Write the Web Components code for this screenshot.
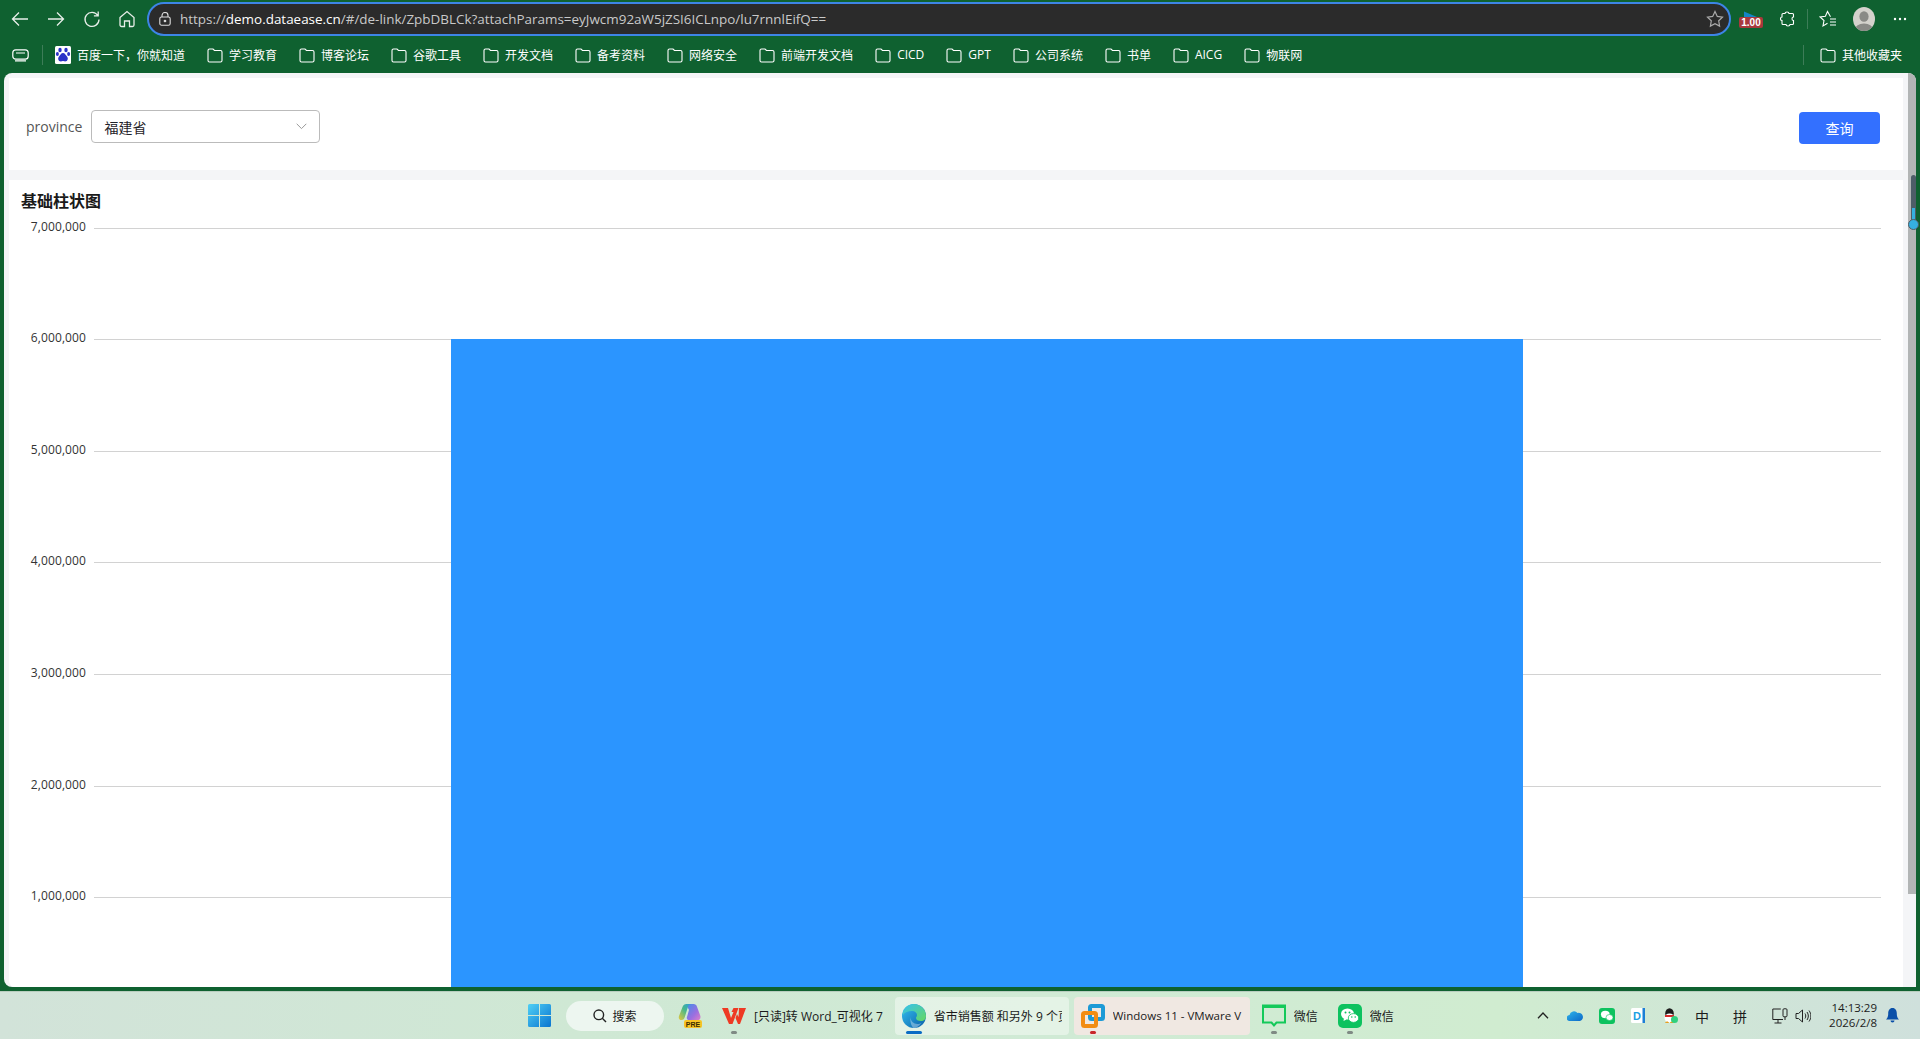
<!DOCTYPE html>
<html lang="zh">
<head>
<meta charset="utf-8">
<title>DataEase</title>
<style>
  html, body { margin: 0; height: 100%; overflow: hidden; }
  body {
    font-family: "Open Sans", "Noto Sans CJK SC", sans-serif;
    background: #0f6130;
  }
  #app { display: flex; flex-direction: column; height: 1039px; }
  svg { display: block; }
</style>
</head>
<body>
<div id="app">
  <browser-toolbar url-host="demo.dataease.cn" url-rest="/#/de-link/ZpbDBLCk?attachParams=eyJwcm92aW5jZSI6ICLnpo/lu7rnnlEifQ=="></browser-toolbar>
  <bookmark-bar>
    <bookmark-item text="百度一下，你就知道" baidu></bookmark-item>
    <bookmark-item text="学习教育"></bookmark-item>
    <bookmark-item text="博客论坛"></bookmark-item>
    <bookmark-item text="谷歌工具"></bookmark-item>
    <bookmark-item text="开发文档"></bookmark-item>
    <bookmark-item text="备考资料"></bookmark-item>
    <bookmark-item text="网络安全"></bookmark-item>
    <bookmark-item text="前端开发文档"></bookmark-item>
    <bookmark-item text="CICD"></bookmark-item>
    <bookmark-item text="GPT"></bookmark-item>
    <bookmark-item text="公司系统"></bookmark-item>
    <bookmark-item text="书单"></bookmark-item>
    <bookmark-item text="AICG"></bookmark-item>
    <bookmark-item text="物联网"></bookmark-item>
    <bookmark-item slot="end" text="其他收藏夹"></bookmark-item>
  </bookmark-bar>
  <page-frame>
    <filter-panel label="province" value="福建省" action="查询"></filter-panel>
    <bar-chart title-text="基础柱状图"></bar-chart>
  </page-frame>
  <win-taskbar>
    <!-- start button -->
    <svg width="23" height="23" viewBox="0 0 23 23">
      <defs><linearGradient id="wg" x1="0" y1="0" x2="1" y2="1"><stop offset="0" stop-color="#4fd0f5"/><stop offset="1" stop-color="#0a74d0"/></linearGradient></defs>
      <path fill="url(#wg)" d="M0 1.500A1.500 1.500 0 0 1 1.500 0H11V11H0ZM12 0H21.500A1.500 1.500 0 0 1 23 1.500V11H12ZM0 12H11V23H1.500A1.500 1.500 0 0 1 0 21.500ZM12 12H23V21.500A1.500 1.500 0 0 1 21.500 23H12Z"/>
    </svg>
    <search-pill style="margin-left:15px" text="搜索"></search-pill>
    <task-item style="margin-left:14px;padding:0">
      <svg slot="icon" width="24" height="24" viewBox="0 0 24 24">
        <defs>
          <linearGradient id="cp1" x1="0" y1="1" x2="1" y2="0"><stop offset="0" stop-color="#e8c83c"/><stop offset=".55" stop-color="#45b88a"/><stop offset="1" stop-color="#2f9ae0"/></linearGradient>
          <linearGradient id="cp2" x1="0" y1="0" x2="1" y2="1"><stop offset="0" stop-color="#3f8fe8"/><stop offset=".6" stop-color="#9a6fe0"/><stop offset="1" stop-color="#e07fc8"/></linearGradient>
        </defs>
        <path fill="url(#cp2)" d="M8 0h7.500c1.800 0 3 1 3.500 2.700l3.300 9c.8 2.600-.8 4.800-3.300 4.800H12c-1.800 0-2.800-1-3.300-2.600L11 6 8 0z"/>
        <path fill="url(#cp1)" d="M8.500 0h5c-1.800 0-3 1-3.500 2.700L6.800 13c-.6 2-1.500 3-3.300 3C1 16 .3 14 1 12L4.500 3C5.200 1 6.500 0 8.500 0z"/>
        <rect x="6" y="16" width="18" height="8" rx="2" fill="#f7c325"/>
        <text x="15" y="22.600" font-family="Liberation Sans" font-size="7" font-weight="700" text-anchor="middle" fill="#3a2c00">PRE</text>
      </svg>
    </task-item>
    <task-item style="margin-left:20px;padding:0" text="[只读]转 Word_可视化 7" mark="gray">
      <svg slot="icon" width="24" height="24" viewBox="0 0 24 24">
        <path fill="#ee3a24" d="M0 4h6l3 10 2.500-6h-2l2-4h5l-6 16H7zM17 4h7l-6 16h-2l-2.500-6 1.500-4 1.500 3z"/>
      </svg>
    </task-item>
    <task-item style="margin-left:12px;width:174px;background:rgba(255,255,255,.42)" text="省市销售额 和另外 9 个页" mark="active">
      <svg slot="icon" width="24" height="24" viewBox="0 0 24 24">
        <defs>
          <linearGradient id="eg1" x1="0" y1="0" x2="1" y2="1"><stop offset="0" stop-color="#35c1f1"/><stop offset="1" stop-color="#0a5fa8"/></linearGradient>
          <linearGradient id="eg2" x1="0" y1="0" x2="1" y2="1"><stop offset="0" stop-color="#35c1f1"/><stop offset="1" stop-color="#66d860"/></linearGradient>
        </defs>
        <circle cx="12" cy="12" r="12" fill="url(#eg1)"/>
        <path fill="url(#eg2)" d="M1 8C3 2 8 0 12 0c6 0 12 5 12 12 0 3-2 5-5 5-3 0-5-1-5-3 0-1 1-1.500 1-3 0-2-2-4-5-4C6 7 3 8 1 11z"/>
        <path fill="#fff" d="M8.500 13c0 4 3 7 7 7 1.500 0 3-.4 4-1.200C17 22.500 14 24 11.500 24 9 22 8 17 8.500 13z" opacity=".35"/>
      </svg>
    </task-item>
    <task-item style="margin-left:5px;width:176px;background:#f0e8e2;font-size:11.500px" text="Windows 11 - VMware V" mark="red">
      <svg slot="icon" width="24" height="24" viewBox="0 0 24 24" fill="none">
        <rect x="9" y="2" width="13" height="13" rx="1.500" stroke="#1d9ad6" stroke-width="4"/>
        <rect x="2" y="9" width="13" height="13" rx="1.500" stroke="#f28c13" stroke-width="4"/>
      </svg>
    </task-item>
    <task-item style="margin-left:12px;padding:0" text="微信" mark="gray">
      <svg slot="icon" width="24" height="24" viewBox="0 0 24 24" fill="none">
        <path stroke="#14c95a" stroke-width="2" d="M1 1.500h22v17H14.500L12 21.500 9.500 18.500H1z"/>
        <rect x="1" y="1" width="22" height="3" fill="#14c95a"/>
      </svg>
    </task-item>
    <task-item style="margin-left:20px;padding:0" text="微信" mark="gray">
      <svg slot="icon" width="24" height="24" viewBox="0 0 24 24">
        <rect width="24" height="24" rx="5" fill="#0dc25f"/>
        <ellipse cx="9.500" cy="10" rx="6.500" ry="5.500" fill="#fff"/>
        <path fill="#fff" d="M6 14l-.5 3 3-1.500z"/>
        <ellipse cx="15.500" cy="14" rx="5.200" ry="4.400" fill="#fff" stroke="#0dc25f" stroke-width=".8"/>
        <circle cx="7.500" cy="8.500" r="1" fill="#0dc25f"/><circle cx="11.500" cy="8.500" r="1" fill="#0dc25f"/>
        <circle cx="13.800" cy="13" r=".8" fill="#0dc25f"/><circle cx="17.200" cy="13" r=".8" fill="#0dc25f"/>
      </svg>
    </task-item>
    <system-tray slot="tray"></system-tray>
  </win-taskbar>
</div>

<script>
// folder outline used by every bookmark
const FOLDER = `<svg width="16" height="16" viewBox="0 0 16 16" fill="none" stroke="#fff" stroke-width="1.100">
  <path d="M1 3.500A1.500 1.500 0 0 1 2.500 2H6l1.500 1.500h6A1.500 1.500 0 0 1 15 5v8.500a1.500 1.500 0 0 1-1.500 1.500h-11A1.500 1.500 0 0 1 1 13.500z"/>
</svg>`;

const BAIDU = `<svg width="16" height="18" viewBox="0 0 16 18">
  <rect width="16" height="18" rx="1.500" fill="#fff"/>
  <g fill="#2b32c8">
    <ellipse cx="5" cy="4" rx="1.700" ry="2.300"/><ellipse cx="11" cy="4" rx="1.700" ry="2.300"/>
    <ellipse cx="2.400" cy="8" rx="1.500" ry="2"/><ellipse cx="13.600" cy="8" rx="1.500" ry="2"/>
    <path d="M8 7c2 0 2.500 2 4 3.500s1 5-2 5c-1 0-1.200-.4-2-.4s-1 .4-2 .4c-3 0-3.500-3.500-2-5S6 7 8 7z"/>
  </g>
</svg>`;

class BrowserToolbar extends HTMLElement {
  constructor() {
    super();
    this.attachShadow({ mode: "open" });
    this.shadowRoot.innerHTML = `
      <style>
        :host { display: flex; align-items: center; height: 36px; padding-left: 11px; padding-top: 1px; box-sizing: border-box; color: #fff; }
        .nav { display: flex; align-items: center; gap: 18px; margin-right: 12px; }
        .url {
          box-sizing: border-box; width: 1584px; height: 34px; display: flex; align-items: center;
          background: #2b2b2b; border: 2px solid #3d85e6; border-radius: 17px; padding: 0 5px 0 10px;
        }
        .text { flex: 1; margin-left: 9px; font-size: 13.440px; color: #c9c9c9; white-space: nowrap; overflow: hidden; }
        .text b { font-weight: 400; color: #fff; }
        .tools { display: flex; align-items: center; }
      </style>
      <div class="nav">
        <svg width="18" height="18" viewBox="0 0 18 18" fill="none" stroke="#e8eee9" stroke-width="1.300"><path d="M17 9H1.500M8 2.500 1.500 9 8 15.500"/></svg>
        <svg width="18" height="18" viewBox="0 0 18 18" fill="none" stroke="#e8eee9" stroke-width="1.300"><path d="M1 9h15.500M10 2.500 16.500 9 10 15.500"/></svg>
        <svg width="18" height="18" viewBox="0 0 18 18" fill="none" stroke="#e8eee9" stroke-width="1.300"><path d="M14.800 5.500A7 7 0 1 0 16 9.500M15.200 1.500v4.300h-4.300"/></svg>
        <svg width="16" height="18" viewBox="0 0 16 18" fill="none" stroke="#e8eee9" stroke-width="1.300"><path d="M1 7.500 8 1.500l7 6V15a1.500 1.500 0 0 1-1.500 1.500H10.500V11h-5v5.500H2.500A1.500 1.500 0 0 1 1 15z"/></svg>
      </div>
      <div class="url">
        <svg width="12" height="14" viewBox="0 0 12 14" fill="none" stroke="#ddd" stroke-width="1.100"><rect x=".8" y="5" width="10.400" height="8.200" rx="1.800"/><path d="M3 5V3.500a3 3 0 0 1 6 0V5"/><circle cx="6" cy="9" r=".8" fill="#ddd"/></svg>
        <div class="text">https://<b>${this.getAttribute("url-host")}</b>${this.getAttribute("url-rest")}</div>
        <svg width="18" height="18" viewBox="0 0 18 18" fill="none" stroke="#aaa" stroke-width="1.200"><path d="M9 1.500l2.300 4.900 5.200.7-3.800 3.700.9 5.300L9 13.600l-4.600 2.500.9-5.300L1.500 7.100l5.200-.7z"/></svg>
      </div>
      <div class="tools">
        <svg style="margin-left:8px" width="24" height="18" viewBox="0 0 24 18">
          <path d="M5 1.500 18 7H5z" fill="#1585c5"/>
          <rect y="7" width="24" height="11" rx="2" fill="#a8383c"/>
          <text x="12" y="15.700" font-family="Liberation Sans" font-size="10" font-weight="700" text-anchor="middle" fill="#fff">1.00</text>
        </svg>
        <svg style="margin-left:17px" width="15" height="17" viewBox="0 0 15 17" fill="none" stroke="#fff" stroke-width="1.100"><path d="M5 3.500C5 1.500 9 1.500 9 3.500h3.500a1 1 0 0 1 1 1V7c-2 0-2 3.500 0 3.500v3a1 1 0 0 1-1 1H10c0 2-4 2-4 0H3a1 1 0 0 1-1-1V10.500c-2 0-2-3.500 0-3.500V4.500a1 1 0 0 1 1-1z"/></svg>
        <div style="margin-left:12px;width:1px;height:20px;background:#3d7d58"></div>
        <svg style="margin-left:11px" width="18" height="18" viewBox="0 0 18 18" fill="none" stroke="#fff" stroke-width="1.100"><path d="M11.500 6.700 8.500 1.500 6.400 6.200 1 6.900l4 3.600-1 5.400 4.500-2.600M11 9h6M11 12h6M11 15h6"/></svg>
        <svg style="margin-left:15px" width="24" height="24" viewBox="0 0 24 24"><defs><clipPath id="av"><ellipse cx="12" cy="12" rx="11" ry="12"/></clipPath></defs><ellipse cx="12" cy="12" rx="11" ry="12" fill="#d4d2cc"/><g clip-path="url(#av)" fill="#8a8a86"><ellipse cx="12" cy="9.500" rx="4.600" ry="5.300"/><ellipse cx="12" cy="23" rx="9.500" ry="6.500"/></g></svg>
        <svg style="margin-left:17px" width="14" height="4" viewBox="0 0 14 4" fill="#fff"><circle cx="2" cy="2" r="1.200"/><circle cx="7" cy="2" r="1.200"/><circle cx="12" cy="2" r="1.200"/></svg>
      </div>
    `;
  }
}

class BookmarkBar extends HTMLElement {
  constructor() {
    super();
    this.attachShadow({ mode: "open" });
    this.shadowRoot.innerHTML = `
      <style>
        :host { display: flex; align-items: center; height: 37px; padding-left: 12px; padding-right: 18px; box-sizing: border-box; }
        .sep { width: 1px; height: 20px; background: #3d7d58; }
        .items { flex: 1; display: flex; align-items: center; gap: 22px; margin-left: 12px; }
        .end { display: flex; align-items: center; }
        .end .sep { margin-right: 16px; }
      </style>
      <svg width="17" height="14" viewBox="0 0 17 14" fill="none" stroke="#fff" stroke-width="1.200" style="display:block;margin-right:13px"><rect x=".8" y="1.800" width="15.400" height="9.400" rx="3"/><path d="M4 5h9M3 12.800h11"/></svg>
      <div class="sep"></div>
      <div class="items"><slot></slot></div>
      <div class="end"><div class="sep"></div><slot name="end"></slot></div>
    `;
  }
}

class BookmarkItem extends HTMLElement {
  constructor() {
    super();
    this.attachShadow({ mode: "open" });
    this.shadowRoot.innerHTML = `
      <style>
        :host { display: flex; align-items: center; gap: 6px; color: #fff; font-size: 12px; white-space: nowrap; }
      </style>
      ${this.hasAttribute("baidu") ? BAIDU : FOLDER}
      <span>${this.getAttribute("text")}</span>
    `;
  }
}

class PageFrame extends HTMLElement {
  constructor() {
    super();
    this.attachShadow({ mode: "open" });
    this.shadowRoot.innerHTML = `
      <style>
        :host {
          display: flex; flex: 1; min-height: 0; margin: 0 4px 4px 4px; position: relative;
          background: #f4f5f7; border-radius: 8px 8px 0 8px;
        }
        .content { flex: 1; min-width: 0; display: flex; flex-direction: column; gap: 10px; padding: 5px 5px 0 5px; }
        .rail { width: 8px; background: linear-gradient(#b2b5b5 0, #b2b5b5 821px, #f4f5f7 821px); border-radius: 0 8px 0 0; position: relative; }
        .thumb { position: absolute; left: 3px; top: 102px; width: 5px; height: 53px; background: #4e5d68; border-radius: 3px; }
        .thumb::before { content: ""; position: absolute; left: 1px; top: 33px; width: 3px; height: 18px; background: #35b0e0; }
        .ball { box-sizing: border-box; position: absolute; left: 0; top: 146px; width: 11px; height: 11px; background: #35b0e0; border: 1.500px solid #4e5d68; border-radius: 50%; }
      </style>
      <div class="content"><slot></slot></div>
      <div class="rail"><div class="thumb"></div><div class="ball"></div></div>
    `;
  }
}

class FilterPanel extends HTMLElement {
  constructor() {
    super();
    this.attachShadow({ mode: "open" });
    this.shadowRoot.innerHTML = `
      <style>
        :host { display: flex; align-items: center; justify-content: space-between; height: 92px; background: #fff; padding: 0 23px 0 17px; box-sizing: border-box; flex: none; }
        .field { display: flex; align-items: center; gap: 9px; margin-top: 5px; }
        label { font-size: 14px; color: #555; }
        .select {
          box-sizing: border-box; width: 229px; height: 33px; border: 1px solid #bbb; border-radius: 4px;
          display: flex; align-items: center; justify-content: space-between; padding: 0 12px; font-size: 14px; color: #1f2329;
        }
        button {
          width: 81px; height: 32px; border: 0; border-radius: 4px; background: #3370ff; color: #fff;
          font: inherit; font-size: 14px; padding: 0; margin-top: 7px;
        }
      </style>
      <div class="field">
        <label>${this.getAttribute("label")}</label>
        <div class="select">
          <span>${this.getAttribute("value")}</span>
          <svg width="11" height="7" viewBox="0 0 11 7" fill="none" stroke="#999" stroke-width="1"><path d="M.7.8 5.500 5.600 10.300.8"/></svg>
        </div>
      </div>
      <button>${this.getAttribute("action")}</button>
    `;
  }
}

class BarChart extends HTMLElement {
  constructor() {
    super();
    this.attachShadow({ mode: "open" });
    const ticks = ["7,000,000", "6,000,000", "5,000,000", "4,000,000", "3,000,000", "2,000,000", "1,000,000"];
    this.shadowRoot.innerHTML = `
      <style>
        :host { display: block; flex: 1; min-height: 0; background: #fff; overflow: hidden; border-radius: 0 0 0 6px; }
        h2 { margin: 0; padding: 10px 0 0 12px; height: 37px; box-sizing: border-box; font-size: 16px; line-height: 22px; font-weight: 700; color: #1a1a1a; }
        .plot { position: relative; padding-top: 10.500px; padding-right: 22px; }
        .row { display: flex; align-items: flex-start; gap: 8px; height: 111.630px; }
        .row span { width: 77px; flex: none; margin-top: -10px; font-size: 12px; line-height: 18px; text-align: right; color: #333; letter-spacing: .1px; }
        .row i { flex: 1; height: 1px; background: #d2d2d2; }
        .bar { position: absolute; left: 442px; top: 122px; width: 1072px; height: 700px; background: #2b95ff; }
      </style>
      <h2>${this.getAttribute("title-text")}</h2>
      <div class="plot">
        ${ticks.map((t) => `<div class="row"><span>${t}</span><i></i></div>`).join("")}
        <div class="bar"></div>
      </div>
    `;
  }
}

class WinTaskbar extends HTMLElement {
  constructor() {
    super();
    this.attachShadow({ mode: "open" });
    this.shadowRoot.innerHTML = `
      <style>
        :host {
          display: flex; align-items: center; height: 48px; padding-left: 528px; padding-right: 21px; box-sizing: border-box;
          background: linear-gradient(90deg, #d2e3d9 0%, #cfe8d4 30%, #d0ead5 55%, #d0ecd0 78%, #cfe0dc 100%);
          border-top: 1px solid #b9cdbf; color: #1b1b1b; font-size: 12px;
        }
        .center { flex: 1; display: flex; align-items: center; }
      </style>
      <div class="center"><slot></slot></div>
      <slot name="tray"></slot>
    `;
  }
}

class SearchPill extends HTMLElement {
  constructor() {
    super();
    this.attachShadow({ mode: "open" });
    this.shadowRoot.innerHTML = `
      <style>
        :host { display: flex; align-items: center; justify-content: center; gap: 5px; width: 98px; height: 30px; background: #edf6f0; border-radius: 15px; }
      </style>
      <svg width="14" height="14" viewBox="0 0 14 14" fill="none" stroke="#222" stroke-width="1.400"><circle cx="5.800" cy="5.800" r="4.800"/><path d="M9.300 9.300 13 13"/></svg>
      <span>${this.getAttribute("text")}</span>
    `;
  }
}

class TaskItem extends HTMLElement {
  constructor() {
    super();
    this.attachShadow({ mode: "open" });
    const text = this.getAttribute("text");
    const mark = this.getAttribute("mark");
    this.shadowRoot.innerHTML = `
      <style>
        :host {
          display: flex; align-items: center; gap: 8px; height: 38px; padding: 0 7px; box-sizing: border-box;
          border-radius: 4px; white-space: nowrap; overflow: hidden; flex: none;
        }
        .icon { position: relative; width: 24px; height: 38px; display: flex; align-items: center; flex: none; }
        .mark { position: absolute; left: 9px; bottom: 1px; width: 6px; height: 3px; border-radius: 2px; }
        .gray { background: #7f8a84; }
        .red { background: #c8262a; }
        .active { left: 4px; width: 16px; background: #0a6cc4; }
        .label { overflow: hidden; flex: 1; }
      </style>
      <div class="icon"><slot name="icon"></slot>${mark ? `<div class="mark ${mark}"></div>` : ""}</div>
      ${text ? `<div class="label">${text}</div>` : ""}
    `;
  }
}

class SystemTray extends HTMLElement {
  constructor() {
    super();
    this.attachShadow({ mode: "open" });
    this.shadowRoot.innerHTML = `
      <style>
        :host { display: flex; align-items: center; }
        .ime { font-size: 14px; width: 16px; text-align: center; }
        .clock { text-align: right; font-size: 11.500px; line-height: 15px; margin-left: 18px; margin-top: -2px; }
      </style>
      <svg width="12" height="7" viewBox="0 0 12 7" fill="none" stroke="#222" stroke-width="1.300"><path d="M1 6.300 6 1l5 5.300"/></svg>
      <svg style="margin-left:18px" width="16" height="11" viewBox="0 0 16 11">
        <defs><linearGradient id="od" x1="0" y1="0" x2="1" y2="1"><stop offset="0" stop-color="#2fb5ea"/><stop offset="1" stop-color="#0c68c8"/></linearGradient></defs>
        <path fill="url(#od)" d="M3 11a3 3 0 0 1-.5-6A4.500 4.500 0 0 1 10.500 3 3.500 3.500 0 0 1 13 11z"/>
      </svg>
      <svg style="margin-left:16px" width="16" height="16" viewBox="0 0 16 16">
        <rect width="16" height="16" rx="3" fill="#0dc25f"/>
        <ellipse cx="6.300" cy="6.500" rx="4.400" ry="3.700" fill="#fff"/>
        <ellipse cx="10.500" cy="9.500" rx="3.500" ry="3" fill="#fff" stroke="#0dc25f" stroke-width=".6"/>
      </svg>
      <svg style="margin-left:16px" width="14" height="15" viewBox="0 0 14 15">
        <rect width="14" height="15" rx="1.500" fill="#fff"/>
        <rect x="11.500" width="2.500" height="15" fill="#1c7fd6"/>
        <text x="6" y="11.500" font-family="Liberation Sans" font-size="11" font-weight="700" text-anchor="middle" fill="#1ba0e2">D</text>
      </svg>
      <svg style="margin-left:18px" width="15" height="16" viewBox="0 0 15 16">
        <ellipse cx="6.500" cy="5.500" rx="4.300" ry="5.300" fill="#1b1b1b"/>
        <ellipse cx="6.500" cy="10" rx="5" ry="4.500" fill="#fff"/>
        <rect x="2" y="7" width="9" height="2" fill="#d82b2b"/>
        <path d="M2 15c1-2 3.500-2 4 0zM7 15c.5-2 3-2 4 0z" fill="#e8a020"/>
        <circle cx="11.500" cy="11.500" r="3.500" fill="#2fd07e"/>
      </svg>
      <span class="ime" style="margin-left:16px">中</span>
      <span class="ime" style="margin-left:22px">拼</span>
      <svg style="margin-left:24px" width="16" height="16" viewBox="0 0 16 16" fill="none" stroke="#222" stroke-width="1"><path d="M11 11.500H.8V1h8M6 11.500V15M2.500 15h7"/><rect x="11" y=".8" width="4" height="8" rx="1"/><path d="M13 9v3"/></svg>
      <svg style="margin-left:7px" width="16" height="14" viewBox="0 0 16 14" fill="none" stroke="#222" stroke-width="1"><path d="M1 4.500h2.500L7.500 1v12L3.500 9.500H1zM10 4.500c1 1.500 1 3.500 0 5M12 3c1.800 2.500 1.800 5.500 0 8M14 1.500c2.500 3.500 2.500 7.500 0 11"/></svg>
      <div class="clock">14:13:29<br>2026/2/8</div>
      <svg style="margin-left:9px" width="13" height="15" viewBox="0 0 13 15" fill="#0a4fa8"><path d="M6.500 0C9.500 0 10.800 2.500 10.800 5.500c0 3 .7 4.500 2.200 6H0c1.500-1.500 2.200-3 2.200-6C2.200 2.500 3.500 0 6.500 0zM4.500 12.500h4a2 2 0 0 1-4 0z"/></svg>
    `;
  }
}

customElements.define("browser-toolbar", BrowserToolbar);
customElements.define("bookmark-bar", BookmarkBar);
customElements.define("bookmark-item", BookmarkItem);
customElements.define("page-frame", PageFrame);
customElements.define("filter-panel", FilterPanel);
customElements.define("bar-chart", BarChart);
customElements.define("win-taskbar", WinTaskbar);
customElements.define("search-pill", SearchPill);
customElements.define("task-item", TaskItem);
customElements.define("system-tray", SystemTray);
</script>
</body>
</html>
